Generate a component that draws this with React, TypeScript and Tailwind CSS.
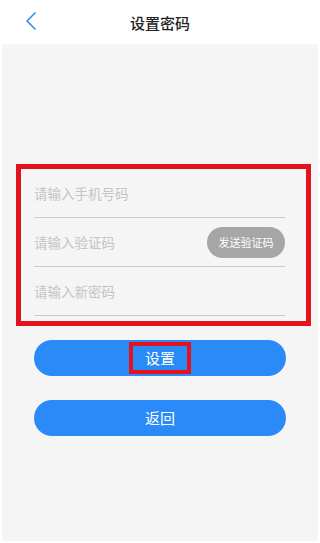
import React from "react"

const fields = [
  { placeholder: "请输入手机号码", type: "tel" },
  { placeholder: "请输入验证码", type: "text", code: true },
  { placeholder: "请输入新密码", type: "password" },
]

const App: React.FC = () => {
  return (
    <div
      className="w-[320px] h-[543px] bg-white flex flex-col overflow-hidden"
      style={{ fontFamily: '"Noto Sans CJK SC", "Noto Sans", sans-serif' }}
    >
      <header className="h-[44px] shrink-0 relative flex items-center justify-center">
        <button className="absolute left-[20px] top-[8px] w-[22px] h-[26px] flex items-center justify-center" aria-label="返回">
          <svg width="12" height="20" viewBox="0 0 12 20" fill="none">
            <polyline points="10.5,1.5 2,10 10.5,18.5" stroke="#2a8bf8" strokeWidth="1.5" />
          </svg>
        </button>
        <h1 className="text-[15px] font-medium text-[#222] leading-none">设置密码</h1>
      </header>

      <main className="flex-1 mx-[2px] mb-[2px] bg-[#f5f5f5] pt-[120px] pl-[14px]">
        <form
          className="w-[295px] h-[162px] border-[5px] border-[#e3121c] pl-[13px] pr-[21px]"
          onSubmit={(e) => e.preventDefault()}
        >
          {fields.map((f) => (
            <div key={f.placeholder} className="h-[49px] border-b border-[#cbcbcb] flex items-center">
              <input
                type={f.type}
                placeholder={f.placeholder}
                className="flex-1 min-w-0 bg-transparent outline-none text-[13.5px] text-[#333] placeholder:text-[#c4c4c4]"
              />
              {f.code && (
                <button
                  type="button"
                  className="w-[78px] h-[31px] rounded-full bg-[#a6a6a6] text-white text-[11px] shrink-0"
                >
                  发送验证码
                </button>
              )}
            </div>
          ))}
        </form>

        <div className="flex flex-col gap-[24px] mt-[14px] pl-[18px] w-[270px]">
          <button className="h-[36px] w-[252px] rounded-full bg-[#2a8bf8] text-white text-[15px] flex items-center justify-center">
            <span className="h-[32px] border-[4px] border-[#e3121c] px-[12px] flex items-center">设置</span>
          </button>
          <button className="h-[36px] w-[252px] rounded-full bg-[#2a8bf8] text-white text-[15px]">返回</button>
        </div>
      </main>
    </div>
  )
}

export default App
